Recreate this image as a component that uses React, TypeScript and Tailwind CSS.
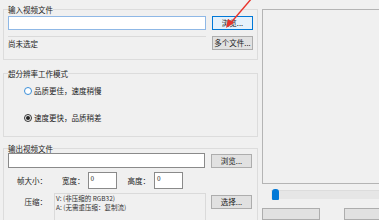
import type { ReactNode } from "react";

const font = `"Noto Sans CJK SC", "Noto Sans", sans-serif`;

function Btn({ children, active }: { children: ReactNode; active?: boolean }) {
  return (
    <div
      className={
        active
          ? "w-[41px] h-[14px] flex items-center justify-center border border-[#0078d7] bg-[#e5f1fb] text-[7.5px] leading-none text-[#1a1a1a]"
          : "w-[41px] h-[14px] flex items-center justify-center border border-[#adadad] bg-[#e1e1e1] text-[7.5px] leading-none text-[#1a1a1a]"
      }
    >
      {children}
    </div>
  );
}

function Group({ title, className, children }: { title: string; className: string; children: ReactNode }) {
  return (
    <fieldset className={"border border-[#dcdcdc] px-[4px] " + className}>
      <legend className="px-0 h-[9px] text-[7.5px] leading-[9px] text-[#1a1a1a]">{title}</legend>
      {children}
    </fieldset>
  );
}

function Radio({ label, checked }: { label: string; checked?: boolean }) {
  return (
    <div className="h-[10px] flex items-center pl-[16px]">
      <div
        className={
          checked
            ? "w-[8px] h-[8px] rounded-full border border-[#333] flex items-center justify-center"
            : "w-[8px] h-[8px] rounded-full border border-[#3b8fd9] bg-white"
        }
      >
        {checked && <div className="w-[4px] h-[4px] rounded-full bg-[#222]" />}
      </div>
      <span className="ml-[2px] text-[7.5px] leading-none text-[#1a1a1a]">{label}</span>
    </div>
  );
}

export default function App() {
  return (
    <div
      className="relative w-[379px] h-[220px] overflow-hidden bg-[#f0f0f0] flex pl-[3px]"
      style={{ fontFamily: font }}
    >
      {/* left column */}
      <div className="w-[255px] flex flex-col shrink-0">
        <Group title="输入视频文件" className="mt-[5px] pt-[2px] pb-[9px]">
          <div className="flex items-center gap-[6px]">
            <div className="w-[198px] h-[14px] border border-[#8fb8e6] bg-white" />
            <Btn active>浏览...</Btn>
          </div>
          <div className="flex items-center gap-[6px] mt-[6px]">
            <div className="w-[198px] h-[14px] border-t border-[#dadada] bg-[#f0f0f0] flex items-center text-[7.5px] leading-none text-[#1a1a1a]">
              尚未选定
            </div>
            <Btn>多个文件...</Btn>
          </div>
        </Group>

        <Group title="超分辨率工作模式" className="mt-[9px] pt-[8px] pb-[13px]">
          <Radio label="品质更佳，速度稍慢" />
          <div className="mt-[17px]">
            <Radio label="速度更快，品质稍差" checked />
          </div>
        </Group>

        <Group title="输出视频文件" className="mt-[7px] pt-0 pb-[4px]">
          <div className="flex items-center gap-[6px]">
            <div className="w-[197px] h-[15px] border border-[#8a8a8a] bg-white" />
            <Btn>浏览...</Btn>
          </div>
          <div className="flex items-center h-[17px] mt-[4px] text-[7.5px] leading-none text-[#1a1a1a]">
            <span className="w-[39px] text-right">帧大小：</span>
            <span className="ml-[15px]">宽度：</span>
            <div className="ml-[3px] w-[29px] h-[17px] border border-[#8a8a8a] bg-white pl-[2px] pt-[2px] text-[6.5px] leading-none">0</div>
            <span className="ml-[11px]">高度：</span>
            <div className="ml-[4px] w-[29px] h-[17px] border border-[#8a8a8a] bg-white pl-[2px] pt-[2px] text-[6.5px] leading-none">0</div>
          </div>
          <div className="flex items-start mt-[4px] h-[28px] text-[7.5px] leading-none text-[#1a1a1a]">
            <span className="w-[39px] text-right pt-[5px]">压缩：</span>
            <div className="ml-[7px] w-[152px] h-[28px] border border-[#dadada] bg-[#f0f0f0] pl-[1px] text-[6.5px] leading-[9px] text-[#333]">
              <div>V: (非压缩的 RGB32)</div>
              <div>A: (无需重压缩：复制流)</div>
            </div>
            <div className="ml-[5px] mt-[2px]">
              <Btn>选择...</Btn>
            </div>
          </div>
        </Group>
      </div>

      {/* right column */}
      <div className="ml-[4px] pt-[9px] flex flex-col shrink-0 w-[140px]">
        <div className="h-[182px] border border-[#b4b4b4] bg-[#f0f0f0]" />
        <div className="mt-[5px] h-[11px] pl-[9px] flex items-center">
          <div className="relative flex-1 h-[9px] bg-[#e6e6e6] border-t border-[#dcdcdc]">
            <div className="absolute left-[1px] top-[-2px] w-[7px] h-[11px] bg-[#0078d7] rounded-t-[3px] rounded-b-[1px]" />
          </div>
        </div>
        <div className="mt-[8px] flex gap-[24px]">
          <div className="w-[61px] h-[12px] border border-[#adadad] bg-[#e1e1e1]" />
          <div className="w-[61px] h-[12px] border border-[#adadad] bg-[#e1e1e1]" />
        </div>
      </div>

      {/* red annotation arrow */}
      <svg className="absolute left-[220px] top-0 pointer-events-none" width="40" height="32" viewBox="0 0 40 32">
        <line x1="32" y1="-2" x2="9" y2="25" stroke="#e8332b" strokeWidth="1.4" />
        <polygon points="6,28 8,19 14,23" fill="#e8332b" />
      </svg>
    </div>
  );
}
